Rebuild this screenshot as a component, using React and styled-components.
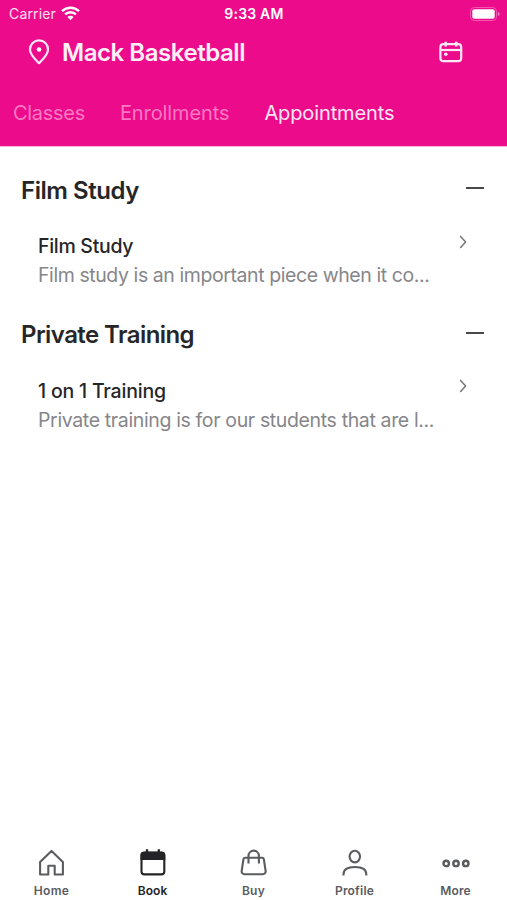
import React from "react";
import styled, { createGlobalStyle } from "styled-components";

const GlobalStyle = createGlobalStyle`
  * { box-sizing: border-box; }
  body { margin: 0; background: #fff; }
  svg { display: block; flex: none; }
`;

const Screen = styled.div`
  display: flex;
  flex-direction: column;
  height: 900px;
  background: #fff;
  color: #262628;
  font-family: Inter, "Liberation Sans", sans-serif;
`;

const Header = styled.header`
  height: 147px;
  border-bottom: 1px solid #fbb5dc;
  background: #eb0b8b;
  background-clip: padding-box;
  color: #fff;
`;

const StatusBar = styled.div`
  display: grid;
  grid-template-columns: 1fr auto 1fr;
  align-items: center;
  height: 27px;
  padding: 0 7px 0 9px;
  font-size: 14px;
  line-height: 27px;
`;

const Carrier = styled.div`
  display: flex;
  align-items: center;
  gap: 5px;
  color: #ffe0f2;
  letter-spacing: 0.15px;
`;

const Clock = styled.div`
  font-size: 14px;
  font-weight: 600;
  letter-spacing: 0.2px;
  margin-left: -1px;
`;

const BatterySlot = styled.div`
  display: flex;
  justify-content: flex-end;
`;

const TitleBar = styled.div`
  display: flex;
  align-items: center;
  height: 50px;
  padding: 0 44px 0 28px;
`;

const Title = styled.h1`
  flex: 1;
  margin: 1px 0 0 12px;
  color: #fff0f8;
  font-size: 24px;
  font-weight: 600;
  line-height: 30px;
  letter-spacing: -0.45px;
`;

const Tabs = styled.nav`
  display: flex;
  gap: 35px;
  padding: 21px 13px 0;
`;

const Tab = styled.div`
  font-size: 20px;
  line-height: 30px;
  letter-spacing: ${(p) => p.$spacing}px;
  color: ${(p) => (p.$active ? "#ffe6f4" : "#fb78c2")};
`;

const Content = styled.main`
  flex: 1;
`;

const Section = styled.section`
  height: 144.5px;
  padding: 27px 22px 0 21px;
`;

const SectionHeader = styled.div`
  display: flex;
  align-items: center;
  justify-content: space-between;
  height: 32px;
`;

const SectionTitle = styled.h2`
  margin: 1px 0 0;
  font-size: 24px;
  font-weight: 600;
  line-height: 32px;
  letter-spacing: ${(p) => p.$spacing}px;
`;

const Collapse = styled.div`
  width: 18px;
  height: 2px;
  margin: -4px 1px 0 0;
  background: #48484a;
`;

const Item = styled.div`
  display: flex;
  justify-content: space-between;
  padding: 26px 17px 0 17px;
`;

const ItemName = styled.div`
  font-size: 19.5px;
  font-weight: 500;
  line-height: 29px;
  letter-spacing: ${(p) => p.$spacing}px;
`;

const ItemText = styled.div`
  font-size: 19.5px;
  line-height: 28px;
  color: #86868a;
  white-space: nowrap;
  letter-spacing: ${(p) => p.$spacing}px;
`;

const Chevron = styled.svg`
  margin-top: 1.5px;
`;

const TabBar = styled.nav`
  display: grid;
  grid-template-columns: repeat(5, 101px);
  height: 56px;
  padding: 4px 1px 0;
`;

const NavItem = styled.div`
  display: flex;
  flex-direction: column;
  align-items: center;
  color: ${(p) => (p.$active ? "#242426" : "#5a5c5f")};
`;

const NavLabel = styled.div`
  margin-top: 5px;
  font-size: 12px;
  font-weight: 600;
  line-height: 16px;
  letter-spacing: ${(p) => p.$spacing ?? 0.3}px;
`;

const WifiIcon = () => (
  <svg width="19" height="15" viewBox="0 0 19 15" fill="none" stroke="#fff" strokeWidth="2.5">
    <path d="M1 5.1a12.2 12.2 0 0 1 17 0M4.1 8.4a7.7 7.7 0 0 1 10.8 0" />
    <path d="M9.5 14.2 6.4 11.1a4.4 4.4 0 0 1 6.2 0Z" fill="#fff" stroke="none" />
  </svg>
);

const BatteryIcon = () => (
  <svg width="31" height="14" viewBox="0 0 31 14">
    <rect x="1.5" y="0.5" width="26" height="13" rx="3.8" fill="none" stroke="#f557b2" />
    <rect x="3.3" y="2.3" width="22.4" height="9.4" rx="2" fill="#fff" />
    <path d="M28.9 4.8c2.1.7 2.1 3.7 0 4.4z" fill="#f77fc4" />
  </svg>
);

const PinIcon = () => (
  <svg width="22" height="26" viewBox="0 0 22 26" fill="none" stroke="#ffe8f5" strokeWidth="2.2">
    <path d="M11 24.2C7.7 20.6 2 16.1 2 10.4a9 9 0 0 1 18 0C20 16.1 14.3 20.6 11 24.2Z" strokeLinejoin="round" />
    <circle cx="11" cy="10.5" r="2.3" fill="#fff" stroke="none" />
  </svg>
);

const CalendarIcon = () => (
  <svg width="24" height="22" viewBox="0 0 24 22" fill="none" stroke="#ffe8f5" strokeWidth="2.2">
    <rect x="1.4" y="3.2" width="20.8" height="17" rx="3" />
    <path d="M1.4 9h20.8" />
    <path d="M6.7 0.7v4.9M17.2 0.7v4.9" strokeWidth="2.5" />
    <circle cx="6.8" cy="13.3" r="1.8" fill="#ffe8f5" stroke="none" />
  </svg>
);

const iconProps = {
  width: 30,
  height: 30,
  viewBox: "0 0 30 30",
  fill: "none",
  stroke: "currentColor",
  strokeWidth: 2.1,
};

const HomeIcon = () => (
  <svg {...iconProps}>
    <path d="M3.1 14.1 14.5 2.9l11.4 11.2v12.4h-8.2v-8.8h-6.4v8.8H3.1z" strokeLinejoin="round" />
  </svg>
);

const BookIcon = () => (
  <svg {...iconProps}>
    <rect x="3.5" y="4.6" width="22.8" height="21.8" rx="3" />
    <path d="M2.5 12V7.1a3.4 3.4 0 0 1 3.4-3.4h18a3.4 3.4 0 0 1 3.4 3.4V12z" fill="currentColor" stroke="none" />
    <path d="M9 1.2v3M20.8 1.2v3" strokeWidth="2.3" />
  </svg>
);

const BuyIcon = () => (
  <svg {...iconProps}>
    <path
      d="M6.2 9.8h16.9a1.8 1.8 0 0 1 1.8 1.5l1.7 11.5a2.8 2.8 0 0 1-2.8 3.4H5.5a2.8 2.8 0 0 1-2.8-3.4l1.7-11.5a1.8 1.8 0 0 1 1.8-1.5Z"
      strokeLinejoin="round"
    />
    <path d="M9.5 15.6V7.8a5.2 5.2 0 0 1 10.4 0v7.8" />
  </svg>
);

const ProfileIcon = () => (
  <svg {...iconProps}>
    <ellipse cx="14.8" cy="8.6" rx="5.2" ry="5.8" />
    <path d="M3.5 27.4v-1c0-4.5 3.6-7.4 11.4-7.4s11.4 2.9 11.4 7.4v1" />
  </svg>
);

const MoreIcon = () => (
  <svg {...iconProps} strokeWidth="2.4">
    <circle cx="5.2" cy="15.4" r="2.7" />
    <circle cx="15" cy="15.4" r="2.7" />
    <circle cx="24.8" cy="15.4" r="2.7" />
  </svg>
);

const sections = [
  {
    title: "Film Study",
    titleSpacing: -0.45,
    name: "Film Study",
    nameSpacing: -0.3,
    text: "Film study is an important piece when it co...",
    textSpacing: -0.42,
  },
  {
    title: "Private Training",
    titleSpacing: -0.57,
    name: "1 on 1 Training",
    nameSpacing: -0.2,
    text: "Private training is for our students that are l...",
    textSpacing: -0.36,
  },
];

const navItems = [
  { label: "Home", Icon: HomeIcon },
  { label: "Book", Icon: BookIcon, active: true, spacing: 0.05 },
  { label: "Buy", Icon: BuyIcon },
  { label: "Profile", Icon: ProfileIcon, spacing: 0.2 },
  { label: "More", Icon: MoreIcon, spacing: 0.15 },
];

export default function App() {
  return (
    <Screen>
      <GlobalStyle />
      <Header>
        <StatusBar>
          <Carrier>
            Carrier
            <WifiIcon />
          </Carrier>
          <Clock>9:33 AM</Clock>
          <BatterySlot>
            <BatteryIcon />
          </BatterySlot>
        </StatusBar>
        <TitleBar>
          <PinIcon />
          <Title>Mack Basketball</Title>
          <CalendarIcon />
        </TitleBar>
        <Tabs>
          <Tab $spacing={-0.3}>Classes</Tab>
          <Tab $spacing={-0.1}>Enrollments</Tab>
          <Tab $spacing={-0.12} $active>
            Appointments
          </Tab>
        </Tabs>
      </Header>
      <Content>
        {sections.map((s) => (
          <Section key={s.title}>
            <SectionHeader>
              <SectionTitle $spacing={s.titleSpacing}>{s.title}</SectionTitle>
              <Collapse />
            </SectionHeader>
            <Item>
              <div>
                <ItemName $spacing={s.nameSpacing}>{s.name}</ItemName>
                <ItemText $spacing={s.textSpacing}>{s.text}</ItemText>
              </div>
              <Chevron width="10" height="16" viewBox="0 0 10 16" fill="none" stroke="#77777a" strokeWidth="1.5">
                <path d="M2.2 2 7.6 8l-5.4 6" />
              </Chevron>
            </Item>
          </Section>
        ))}
      </Content>
      <TabBar>
        {navItems.map(({ label, Icon, active, spacing }) => (
          <NavItem key={label} $active={active}>
            <Icon />
            <NavLabel $spacing={spacing}>{label}</NavLabel>
          </NavItem>
        ))}
      </TabBar>
    </Screen>
  );
}
